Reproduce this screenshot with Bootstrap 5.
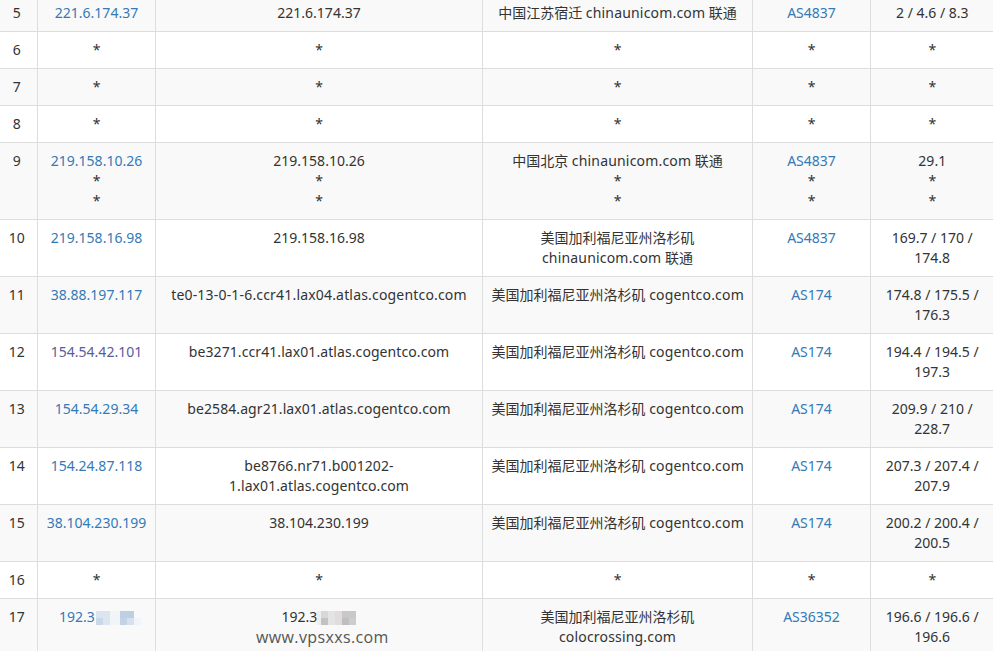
<!DOCTYPE html>
<html lang="zh"><head><meta charset="utf-8">
<link href="https://cdn.jsdelivr.net/npm/bootstrap@5.3.0/dist/css/bootstrap.min.css" rel="stylesheet">
<style>
html,body{height:651px;overflow:hidden;background:#fff}
body{font-family:"Noto Sans","Noto Sans CJK SC",sans-serif;font-size:14px;line-height:20px;color:#333}
.trace{table-layout:fixed;width:993px;margin:-5px 0 0;border-collapse:collapse;--bs-table-bg:transparent;--bs-table-striped-bg:#f9f9f9;--bs-table-striped-color:#333;--bs-table-color:#333;color:#333}
.trace td{padding:8px 8px 8px 9px;line-height:20px;border:0;border-top:1px solid #ddd;border-left:1px solid #ddd;text-align:center;vertical-align:top;font-size:14px}
.trace td:first-child{border-left:0;padding-left:8px;padding-right:11px}
.trace tr:first-child td{border-top:0}
.trace a{color:#337ab7;text-decoration:none}
.trace a.seen{color:#5b5b9b}
.dom{letter-spacing:.18px}
.host{letter-spacing:.08px}
.watermark{position:absolute;left:256px;top:627px;font-size:16px;line-height:20px;letter-spacing:.38px;color:#555;font-family:"Open Sans",sans-serif}
.mosaic{display:inline-block;vertical-align:-3px;overflow:visible}
</style></head><body>
<table class="table table-striped trace">
<colgroup><col style="width:37px"><col style="width:118px"><col style="width:327px"><col style="width:270px"><col style="width:118px"><col style="width:123px"></colgroup>
<tbody>
<tr><td>5</td><td><a href="#">221.6.174.37</a></td><td>221.6.174.37</td><td class="text-nowrap">中国江苏宿迁 <span class="dom">chinaunicom.com</span> 联通</td><td><a href="#">AS4837</a></td><td>2 / 4.6 / 8.3</td></tr>
<tr><td>6</td><td>*</td><td>*</td><td>*</td><td>*</td><td>*</td></tr>
<tr><td>7</td><td>*</td><td>*</td><td>*</td><td>*</td><td>*</td></tr>
<tr><td>8</td><td>*</td><td>*</td><td>*</td><td>*</td><td>*</td></tr>
<tr><td>9</td><td><a href="#">219.158.10.26</a><br>*<br>*</td><td>219.158.10.26<br>*<br>*</td><td class="text-nowrap">中国北京 <span class="dom">chinaunicom.com</span> 联通<br>*<br>*</td><td><a href="#">AS4837</a><br>*<br>*</td><td>29.1<br>*<br>*</td></tr>
<tr><td>10</td><td><a href="#">219.158.16.98</a></td><td>219.158.16.98</td><td>美国加利福尼亚州洛杉矶<br><span class="dom">chinaunicom.com</span> 联通</td><td><a href="#">AS4837</a></td><td>169.7 / 170 / 174.8</td></tr>
<tr><td>11</td><td><a href="#">38.88.197.117</a></td><td class="dom text-nowrap">te0-13-0-1-6.ccr41.lax04.atlas.cogentco.com</td><td class="text-nowrap">美国加利福尼亚州洛杉矶 <span class="dom">cogentco.com</span></td><td><a href="#">AS174</a></td><td>174.8 / 175.5 / 176.3</td></tr>
<tr><td>12</td><td><a href="#" class="seen">154.54.42.101</a></td><td class="host">be3271.ccr41.lax01.atlas.cogentco.com</td><td class="text-nowrap">美国加利福尼亚州洛杉矶 <span class="dom">cogentco.com</span></td><td><a href="#">AS174</a></td><td>194.4 / 194.5 / 197.3</td></tr>
<tr><td>13</td><td><a href="#">154.54.29.34</a></td><td class="host">be2584.agr21.lax01.atlas.cogentco.com</td><td class="text-nowrap">美国加利福尼亚州洛杉矶 <span class="dom">cogentco.com</span></td><td><a href="#">AS174</a></td><td>209.9 / 210 / 228.7</td></tr>
<tr><td>14</td><td><a href="#">154.24.87.118</a></td><td class="host">be8766.nr71.b001202-<br>1.lax01.atlas.cogentco.com</td><td class="text-nowrap">美国加利福尼亚州洛杉矶 <span class="dom">cogentco.com</span></td><td><a href="#">AS174</a></td><td>207.3 / 207.4 / 207.9</td></tr>
<tr><td>15</td><td><a href="#">38.104.230.199</a></td><td>38.104.230.199</td><td class="text-nowrap">美国加利福尼亚州洛杉矶 <span class="dom">cogentco.com</span></td><td><a href="#">AS174</a></td><td>200.2 / 200.4 / 200.5</td></tr>
<tr><td>16</td><td>*</td><td>*</td><td>*</td><td>*</td><td>*</td></tr>
<tr><td>17</td><td><a href="#">192.3</a><svg class="mosaic" width="39" height="14"><path fill="#dce5ef" d="M1 0h14v7H1z"/><path fill="#f2f5f8" d="M15 0h10v14H15z"/><path fill="#bdd0e3" d="M25 0h14v7H25z"/><path fill="#c9d8e8" d="M1 7h7v7H1z"/><path fill="#dde6f0" d="M8 7h7v7H8z"/><path fill="#c1d3e5" d="M25 7h7v7h-7z"/><path fill="#d6e1ed" d="M32 7h7v7h-7z"/><path fill="#f1f4f8" d="M39 7h7v7h-7z"/></svg></td><td>192.3<svg class="mosaic" width="39" height="14"><path fill="#eeeeee" d="M0 0h4v14H0z"/><path fill="#d8d8d8" d="M4 0h7v7H4z"/><path fill="#c2c2c2" d="M4 7h7v7H4z"/><path fill="#e4e4e4" d="M11 0h7v14h-7z"/><path fill="#dfdcdb" d="M18 0h7v14h-7z"/><path fill="#c8c8c8" d="M25 0h14v7H25z"/><path fill="#bfbfbf" d="M25 7h7v7h-7z"/><path fill="#cdcdcd" d="M32 7h7v7h-7z"/></svg></td><td>美国加利福尼亚州洛杉矶<br><span class="dom">colocrossing.com</span></td><td><a href="#">AS36352</a></td><td>196.6 / 196.6 / 196.6</td></tr>
</tbody></table>
<div class="watermark">www.vpsxxs.com</div>
</body></html>
